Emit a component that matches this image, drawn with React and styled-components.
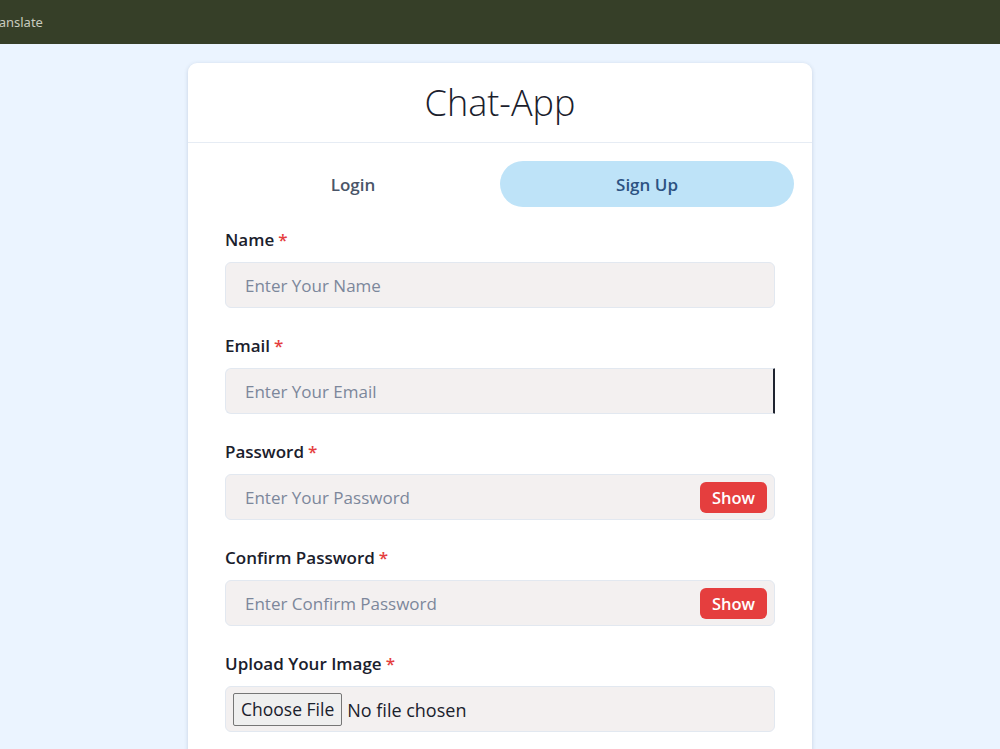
import React from 'react';
import styled, { createGlobalStyle } from 'styled-components';

const GlobalStyle = createGlobalStyle`
  html, body {
    margin: 0;
    padding: 0;
    background: #ebf4ff;
    font-family: "Open Sans", "Noto Sans", sans-serif;
    color: #1a202c;
  }
  * { box-sizing: border-box; }
`;

const TopBar = styled.div`
  height: 44px;
  background: #363f28;
  display: flex;
  align-items: center;
  overflow: hidden;
`;

const TopBarText = styled.span`
  margin-left: -13px;
  font-family: "Noto Sans", sans-serif;
  font-size: 13px;
  color: #c9cbbf;
`;

const Page = styled.main`
  display: flex;
  justify-content: center;
  padding-top: 19px;
`;

const Card = styled.section`
  width: 624px;
  background: #fff;
  border-radius: 9px;
  box-shadow: 0 1px 4px rgba(40, 60, 100, 0.18);
  min-height: 720px;
`;

const CardHeader = styled.header`
  height: 80px;
  display: flex;
  align-items: center;
  justify-content: center;
  border-bottom: 1px solid #e6ecf4;
`;

const Title = styled.h1`
  margin: 0;
  font-family: "Open Sans", sans-serif;
  font-weight: 300;
  font-size: 36px;
  color: #1a202c;
`;

const Tabs = styled.div`
  display: grid;
  grid-template-columns: 1fr 1fr;
  margin: 18px 18px 0;
`;

const Tab = styled.button`
  height: 46px;
  border: none;
  border-radius: 23px;
  font-family: "Open Sans", sans-serif;
  font-size: 17px;
  font-weight: 600;
  cursor: pointer;
  background: ${p => (p.$active ? '#bee3f8' : 'transparent')};
  color: ${p => (p.$active ? '#2c5282' : '#4a5568')};
`;

const Form = styled.form`
  display: flex;
  flex-direction: column;
  gap: 26px;
  padding: 21px 37px 0;
`;

const Field = styled.div`
  display: flex;
  flex-direction: column;
  gap: 10px;
`;

const Label = styled.label`
  font-size: 17px;
  font-weight: 600;
  line-height: 24px;
  color: #1a202c;
`;

const Required = styled.span`
  color: #e53e3e;
  margin-left: 4px;
`;

const InputWrap = styled.div`
  position: relative;
  height: 46px;
  background: #f3f0f0;
  border: 1px solid #e2e8f0;
  border-right: ${p => (p.$edge ? '2px solid #1f2430' : '1px solid #e2e8f0')};
  border-radius: ${p => (p.$edge ? '6px 1px 1px 6px' : '6px')};
  display: flex;
  align-items: center;
  padding: 0 7px 0 17px;
`;

const Input = styled.input`
  flex: 1;
  min-width: 0;
  height: 100%;
  border: none;
  background: transparent;
  outline: none;
  font-family: "Open Sans", sans-serif;
  font-size: 17px;
  color: #1a202c;
  &::placeholder {
    color: #7c879b;
  }
`;

const ShowButton = styled.button`
  height: 31px;
  padding: 0 12px;
  border: none;
  border-radius: 6px;
  background: #e53e3e;
  color: #fff;
  font-family: "Open Sans", sans-serif;
  font-size: 16.5px;
  font-weight: 600;
  cursor: pointer;
`;

const FileWrap = styled(InputWrap)`
  padding-left: 7px;
`;

const FileInput = styled.input`
  font-family: "Open Sans", sans-serif;
  font-size: 18px;
  color: #1a202c;
  &::file-selector-button {
    font-family: "Open Sans", sans-serif;
    font-size: 17.5px;
    height: 33px;
    padding: 0 7px;
    margin-right: 5px;
    background: #efefef;
    border: 1px solid #767676;
    border-radius: 2px;
    color: #1a202c;
  }
`;

const TextField = ({ label, placeholder, type = 'text', edge }) => (
  <Field>
    <Label>
      {label}
      <Required>*</Required>
    </Label>
    <InputWrap $edge={edge}>
      <Input type={type} placeholder={placeholder} />
    </InputWrap>
  </Field>
);

const PasswordField = ({ label, placeholder }) => (
  <Field>
    <Label>
      {label}
      <Required>*</Required>
    </Label>
    <InputWrap>
      <Input type="password" placeholder={placeholder} />
      <ShowButton type="button">Show</ShowButton>
    </InputWrap>
  </Field>
);

export default function App() {
  return (
    <>
      <GlobalStyle />
      <TopBar>
        <TopBarText>Translate</TopBarText>
      </TopBar>
      <Page>
        <Card>
          <CardHeader>
            <Title>Chat-App</Title>
          </CardHeader>
          <Tabs>
            <Tab type="button">Login</Tab>
            <Tab type="button" $active>Sign Up</Tab>
          </Tabs>
          <Form onSubmit={e => e.preventDefault()}>
            <TextField label="Name" placeholder="Enter Your Name" />
            <TextField label="Email" placeholder="Enter Your Email" type="email" edge />
            <PasswordField label="Password" placeholder="Enter Your Password" />
            <PasswordField label="Confirm Password" placeholder="Enter Confirm Password" />
            <Field>
              <Label>
                Upload Your Image
                <Required>*</Required>
              </Label>
              <FileWrap>
                <FileInput type="file" accept="image/*" />
              </FileWrap>
            </Field>
          </Form>
        </Card>
      </Page>
    </>
  );
}
